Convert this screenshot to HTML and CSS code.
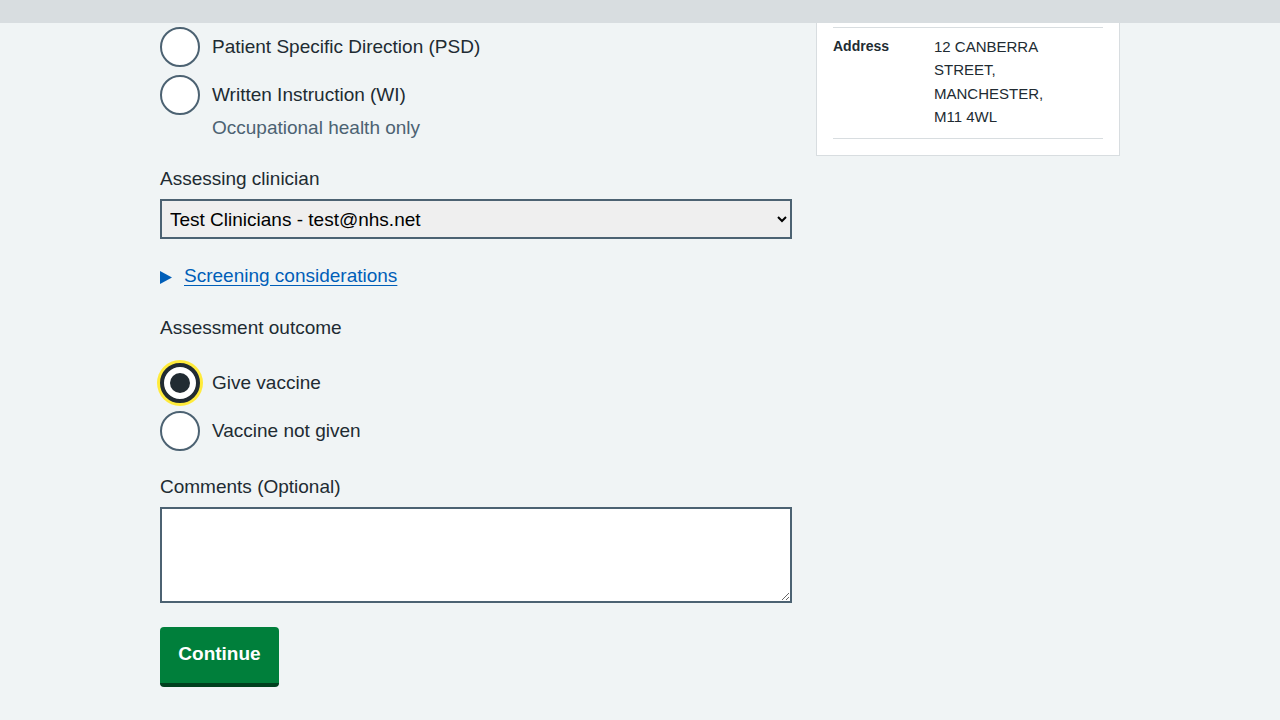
FILE: index.html
```html
<!DOCTYPE html>
<html lang="en">
<head>
<meta charset="utf-8">
<title>Assessment</title>
<link rel="stylesheet" href="styles.css">
</head>
<body>
<div class="topbar"></div>
<div class="page">
  <main class="main">
    <div class="radios">
      <label class="radio"><input type="radio" name="legal"><span class="mark"></span><span class="rlabel">Patient Specific Direction (PSD)</span></label>
      <label class="radio"><input type="radio" name="legal"><span class="mark"></span><span class="rlabel">Written Instruction (WI)</span></label>
      <div class="hint">Occupational health only</div>
    </div>

    <div class="group">
      <label class="label" for="clin">Assessing clinician</label>
      <select id="clin" class="select"><option>Test Clinicians - test@nhs.net</option></select>
    </div>

    <div class="details">
      <svg class="tri" width="12" height="13" viewBox="0 0 12 13"><polygon points="0,0 12,6.5 0,13" fill="#005eb8"/></svg>
      <a class="link" href="#">Screening considerations</a>
    </div>

    <div class="group outcome">
      <div class="label legend">Assessment outcome</div>
      <label class="radio"><input type="radio" name="out" checked><span class="mark checked"></span><span class="rlabel">Give vaccine</span></label>
      <label class="radio"><input type="radio" name="out"><span class="mark"></span><span class="rlabel">Vaccine not given</span></label>
    </div>

    <div class="group comments">
      <label class="label" for="com">Comments (Optional)</label>
      <textarea id="com" class="textarea"></textarea>
    </div>

    <div class="actions">
      <button class="button">Continue</button>
    </div>
  </main>
  <aside class="side">
    <div class="card">
      <div class="row">
        <div class="key">Address</div>
        <div class="val">12 CANBERRA<br>STREET,<br>MANCHESTER,<br>M11 4WL</div>
      </div>
    </div>
  </aside>
</div>
</body>
</html>
```
FILE: styles.css
```css
* { box-sizing: border-box; }
html, body { margin: 0; padding: 0; }
body {
  background: #f0f4f5;
  color: #212b32;
  font-family: "Liberation Sans", Arial, sans-serif;
  font-size: 19px;
  line-height: 1.47;
}
.topbar { height: 23px; background: #d8dde0; }
.page {
  width: 960px;
  margin: 0 auto;
  display: grid;
  grid-template-columns: 632px 304px;
  column-gap: 24px;
  align-items: start;
}
.main { padding-top: 4px; padding-bottom: 40px; }
.radios { display: flex; flex-direction: column; }
.radio {
  display: flex;
  align-items: center;
  height: 40px;
  margin-bottom: 8px;
  cursor: pointer;
}
.radio input { display: none; }
.mark {
  width: 40px; height: 40px;
  border: 2px solid #4c6272;
  border-radius: 50%;
  background: #fff;
  flex: none;
  position: relative;
}
.mark.checked {
  border: 4px solid #212b32;
  box-shadow: 0 0 0 3px #ffeb3b;
}
.mark.checked::after {
  content: "";
  position: absolute;
  left: 6px; top: 6px;
  width: 20px; height: 20px;
  border-radius: 50%;
  background: #212b32;
}
.rlabel { padding-left: 12px; }
.hint { color: #4c6272; padding-left: 52px; margin-top: -9px; line-height: 28px; }
.group { margin-top: 23px; display: flex; flex-direction: column; }
.label { display: block; line-height: 28px; margin-bottom: 6px; }
.select {
  height: 40px;
  width: 100%;
  border: 2px solid #4c6272;
  background-color: #efefef;
  color: #000;
  font-family: inherit;
  font-size: 19px;
  padding: 0 4px;
  border-radius: 0;
}
.details {
  margin-top: 25px;
  display: flex;
  align-items: center;
  height: 24px;
}
.tri { flex: none; margin-right: 12px; margin-top: 3px; }
.link { color: #005eb8; text-decoration: underline; text-underline-offset: 3px; }
.outcome { margin-top: 26px; }
.legend { margin-bottom: 21px; }
.outcome .radio:last-child { margin-bottom: 0; }
.comments { margin-top: 22px; }
.comments .label { margin-bottom: 6px; }
.textarea {
  width: 100%;
  height: 96px;
  border: 2px solid #4c6272;
  background: #fff;
  border-radius: 0;
  font-family: inherit;
  font-size: 19px;
  padding: 4px;
  display: block;
}
.actions { margin-top: 24px; display: flex; }
.button {
  appearance: none;
  background: #007f3b;
  color: #fff;
  border: 0;
  border-bottom: 4px solid #00401e;
  border-radius: 4px;
  font-family: inherit;
  font-weight: bold;
  font-size: 19px;
  line-height: 1;
  height: 60px;
  width: 119px;
  padding: 0 0 3px;
  cursor: pointer;
}
.card {
  background: #fff;
  border: 1px solid #d8dde0;
  border-top: 0;
  padding: 4px 16px 16px;
}
.row {
  display: flex;
  border-top: 1px solid #d8dde0;
  border-bottom: 1px solid #d8dde0;
  padding: 7px 0 9px;
  font-size: 15px;
  line-height: 23.4px;
}
.key { width: 101px; font-weight: bold; font-size: 14px; }
.val { flex: 1; }
```
